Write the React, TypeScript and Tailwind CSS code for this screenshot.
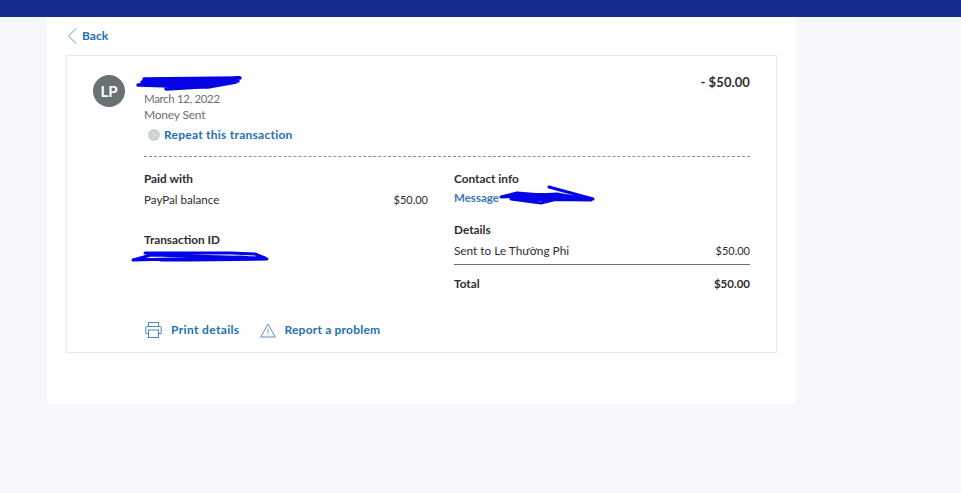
function Scribble({ className, w, h, d, sw = 3 }: { className: string; w: number; h: number; d: string; sw?: number }) {
  return (
    <svg className={className} width={w} height={h} viewBox={`0 0 ${w} ${h}`} fill="none">
      <path d={d} stroke="#0404e6" strokeWidth={sw} strokeLinecap="round" strokeLinejoin="round" />
    </svg>
  );
}

function Row({ children, className = "" }: { children: React.ReactNode; className?: string }) {
  return <div className={`flex justify-between ${className}`}>{children}</div>;
}

export default function App() {
  return (
    <div className="min-h-[493px] bg-[#f5f7fa] text-[#2c2e2f] text-[12px] font-['Lato','Liberation_Sans',sans-serif]">
      <div className="h-[17px] bg-[#142c8e]" />
      <div className="ml-[47px] h-[387px] w-[749px] bg-white px-[19px]">
        <div className="flex h-[38px] items-center">
          <svg width="10" height="16" viewBox="0 0 10 16" fill="none" className="ml-[1px]">
            <path d="M9 0.5 L1.5 8 L9 15.5" stroke="#6b94c4" strokeWidth="1" />
          </svg>
          <span className="ml-[5px] text-[12px] font-bold text-[#2271b1]">Back</span>
        </div>
        <div className="h-[298px] w-[711px] border border-[#e6e6e6] pl-[26px] pr-[26px] pt-[19px]">
          <div className="flex">
            <div className="flex h-[32px] w-[32px] items-center justify-center rounded-full bg-[#687173] text-[15px] font-bold text-white">LP</div>
            <div className="relative ml-[19px] flex-1">
              <div className="flex h-[16px] justify-between">
                <span className="relative">
                  <Scribble
                    className="absolute left-[-8px] top-[0px]"
                    w={110}
                    h={18}
                    sw={3.5}
                    d="M8 4 L104 3 L60 6 L6 7 L102 6 L30 10 L2 10 L84 9 L40 12 L72 12 L100 7 L20 5 L4 10 L64 12 L30 14"
                  />
                </span>
                <span className="mt-[-2px] text-[13px] font-bold leading-[18px] tracking-[0.1px]">- $50.00</span>
              </div>
              <div className="text-[11.5px] leading-[16px] tracking-[-0.35px] text-[#687173]">March 12, 2022</div>
              <div className="text-[12px] leading-[16px] tracking-[-0.2px] text-[#687173]">Money Sent</div>
              <div className="mt-[4px] flex h-[16px] items-center pl-[4px]">
                <span className="flex h-[12px] w-[12px] items-center justify-center rounded-full bg-[#cbd2d6]">
                  <svg width="6" height="8" viewBox="0 0 6 8" fill="none">
                    <path d="M1.5 1 L4.5 4 L1.5 7" stroke="#e8ecef" strokeWidth="1" />
                  </svg>
                </span>
                <span className="ml-[4px] text-[12px] font-bold tracking-[0.25px] text-[#2271b1]">Repeat this transaction</span>
              </div>
              <div className="mt-[13px] border-t border-dashed border-[#8f8f8f]" />
            </div>
          </div>
          <div className="ml-[51px] mt-[14px] flex">
            <div className="w-[284px]">
              <div className="text-[11.8px] font-bold leading-[16px]">Paid with</div>
              <Row className="mt-[5px] text-[11.6px] leading-[16px]">
                <span>PayPal balance</span>
                <span className="text-[11px]">$50.00</span>
              </Row>
              <div className="mt-[24px] text-[11.8px] font-bold leading-[16px]">Transaction ID</div>
              <div className="relative h-[16px]">
                <Scribble
                  className="absolute left-[-13px] top-[2px]"
                  w={140}
                  h={14}
                  sw={3}
                  d="M14 3 L100 3 L124 4 L134 8 L20 5 L2 10 L110 7 L136 9 L60 10 L30 10"
                />
              </div>
            </div>
            <div className="ml-[26px] w-[296px]">
              <div className="text-[11.8px] font-bold leading-[16px]">Contact info</div>
              <div className="relative mt-[3px] leading-[16px]">
                <span className="text-[11.5px] font-bold text-[#3a77ad]">Message</span>
                <Scribble
                  className="absolute left-[43px] top-[-5px]"
                  w={100}
                  h={22}
                  sw={3}
                  d="M52 2 L74 8 L96 14 L20 8 L4 12 L60 9 L94 15 L14 14 L44 18 L60 14 L10 11 L70 12 L30 16"
                />
              </div>
              <div className="mt-[16px] text-[11.8px] font-bold leading-[16px]">Details</div>
              <Row className="mt-[5px] text-[11.8px] leading-[16px]">
                <span>Sent to Le Thường Phi</span>
                <span className="text-[11px]">$50.00</span>
              </Row>
              <div className="mt-[5px] border-t border-[#687173]" />
              <Row className="mt-[11px] text-[11.8px] font-bold leading-[16px]">
                <span>Total</span>
                <span className="text-[11.5px]">$50.00</span>
              </Row>
            </div>
          </div>
          <div className="ml-[52px] mt-[29px] flex items-center font-bold text-[#2271b1]">
            <svg width="17" height="16" viewBox="0 0 17 16" fill="none" stroke="#4a86c0" strokeWidth="1">
              <path d="M3.5 4.5 V0.5 H13.5 V4.5" />
              <path d="M3.5 11.5 H0.8 V5 Q0.8 4.5 1.5 4.5 H15.5 Q16.2 4.5 16.2 5 V11.5 H13.5" />
              <rect x="3.5" y="8" width="10" height="7.5" />
            </svg>
            <span className="ml-[9px] tracking-[0.35px]">Print details</span>
            <svg className="ml-[20px]" width="16" height="15" viewBox="0 0 16 15" fill="none" stroke="#5f8fbf" strokeWidth="1">
              <path d="M8 1 L15.3 14 H0.7 Z" strokeLinejoin="round" />
              <path d="M8 5.5 V10 M8 11.2 V12.2" stroke="#8a97a3" />
            </svg>
            <span className="ml-[9px] tracking-[0.2px]">Report a problem</span>
          </div>
        </div>
      </div>
    </div>
  );
}
